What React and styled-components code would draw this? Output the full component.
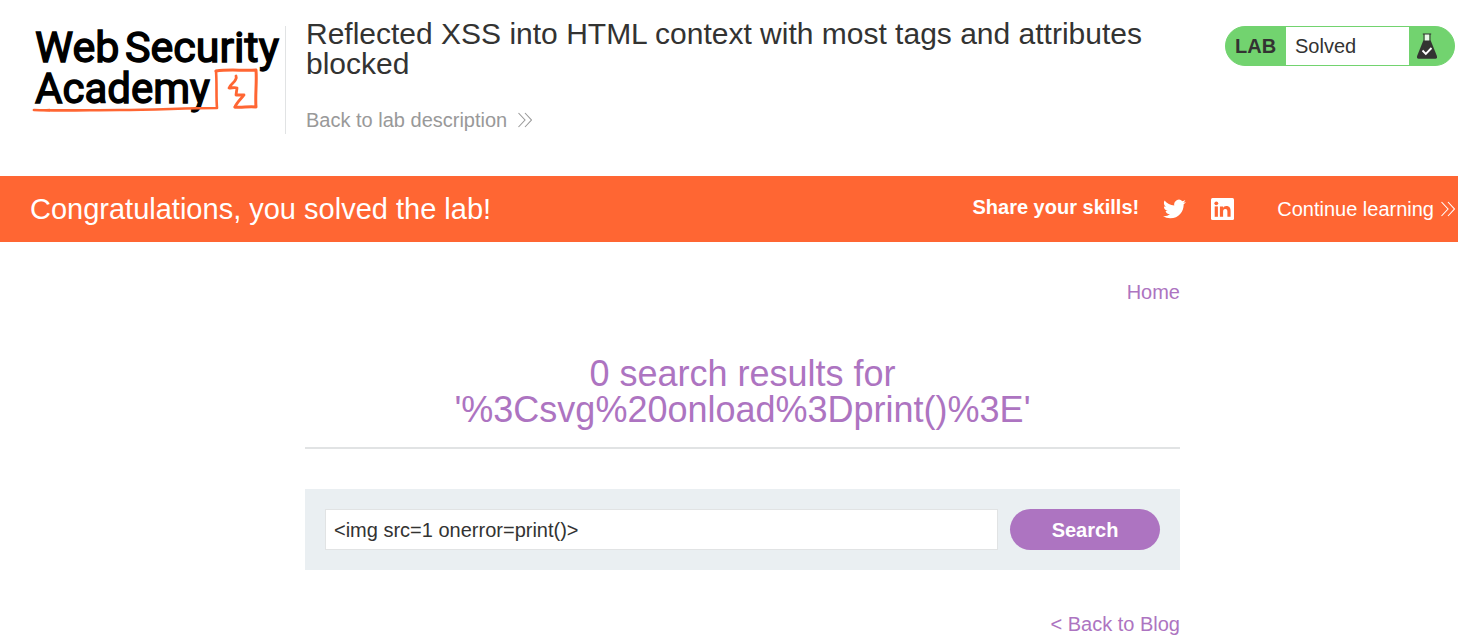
import React, { useState } from "react";
import styled, { createGlobalStyle } from "styled-components";

const colors = {
  orange: "#ff6633",
  purple: "#ad74c1",
  green: "#72d36f",
  ink: "#333332",
  grey: "#999999",
  line: "#e1e3e4",
  panel: "#eaeff2",
};

const GlobalStyle = createGlobalStyle`
  *, *::before, *::after { box-sizing: border-box; }
  body {
    margin: 0;
    background: #ffffff;
    color: ${colors.ink};
    font-family: Arial, "Liberation Sans", sans-serif;
    font-size: 20px;
    line-height: 24px;
    overflow-x: hidden;
  }
`;

const Header = styled.header`
  display: grid;
  grid-template-columns: 286px minmax(0, 875px) 1fr;
  align-items: start;
  padding: 19px 3px 42px 0;
`;

const LogoLink = styled.a`
  display: block;
  height: 108px;
  margin-top: 7px;
  padding-left: 30px;
  border-right: 1px solid ${colors.line};
  color: #000000;

  svg {
    display: block;
    overflow: visible;
  }
`;

const LogoText = styled.text`
  font-family: Roboto, "Liberation Sans", sans-serif;
  font-size: ${(p) => p.$size}px;
  font-weight: 400;
  fill: #000000;
  stroke: #000000;
  stroke-width: 1.4;
`;

const TitleBlock = styled.div`
  padding-left: 20px;
`;

const Title = styled.h1`
  margin: 0 0 29px;
  font-size: 30px;
  line-height: 30px;
  font-weight: 400;
`;

const IconLink = styled.a`
  display: inline-flex;
  align-items: center;
  gap: ${(p) => p.$gap}px;
  color: ${(p) => p.$color};
  text-decoration: none;
  white-space: nowrap;
`;

const Status = styled.div`
  display: flex;
  justify-self: end;
  width: 230px;
  height: 40px;
  margin-top: 7px;
  border: 1px solid ${colors.green};
  border-radius: 20px;
  overflow: hidden;
  background: ${colors.green};
  line-height: 38px;
`;

const StatusTag = styled.span`
  width: 60px;
  padding-left: 9px;
  font-weight: 700;
`;

const StatusText = styled.span`
  flex: 1;
  padding-left: 9px;
  background: #ffffff;
`;

const StatusIcon = styled.span`
  display: flex;
  align-items: center;
  width: 45px;
  padding-left: 7px;
`;

const Banner = styled.section`
  display: flex;
  align-items: center;
  min-height: 66px;
  padding: 0 3px 0 30px;
  background: ${colors.orange};
  color: #ffffff;
`;

const BannerText = styled.h2`
  flex: 1;
  margin: 0;
  font-size: 29px;
  line-height: 32px;
  font-weight: 400;
`;

const Share = styled.div`
  display: flex;
  align-items: center;
  gap: 24px;
  margin-right: 42px;

  a {
    display: block;
    color: #ffffff;
  }

  svg {
    display: block;
  }
`;

const ShareLabel = styled.strong`
  padding-bottom: 4px;
`;

const Main = styled.main`
  max-width: 1180px;
  padding: 38px 0 0 305px;
`;

const LinkRow = styled.nav`
  display: flex;
  justify-content: flex-end;
`;

const TextLink = styled.a`
  color: ${colors.purple};
  text-decoration: none;
`;

const Results = styled.h2`
  margin: 52px 0 40px;
  padding-bottom: 19px;
  border-bottom: 2px solid ${colors.line};
  color: ${colors.purple};
  font-size: 36px;
  line-height: 36px;
  font-weight: 400;
  text-align: center;
`;

const SearchForm = styled.form`
  display: flex;
  gap: 12px;
  margin-bottom: 42px;
  padding: 20px;
  background: ${colors.panel};
`;

const SearchInput = styled.input`
  flex: 1;
  min-width: 0;
  height: 41px;
  padding: 2px 8px 0;
  border: 1px solid ${colors.line};
  border-radius: 0;
  background: #ffffff;
  color: ${colors.ink};
  font: inherit;
  outline: none;
`;

const SearchButton = styled.button`
  width: 150px;
  height: 41px;
  padding: 0;
  border: 0;
  border-radius: 21px;
  background: ${colors.purple};
  color: #ffffff;
  font: inherit;
  font-weight: 700;
  cursor: pointer;
`;

function Logo() {
  return (
    <svg width="250" height="92" viewBox="0 0 250 92" role="img" aria-label="Web Security Academy">
      <LogoText y="36" $size={43}>
        <tspan x="5">Web</tspan>
        <tspan x="95">Security</tspan>
      </LogoText>
      <LogoText x="5" y="77" $size={42}>Academy</LogoText>
      <g fill="none" stroke={colors.orange} strokeLinejoin="round" strokeLinecap="round">
        <path d="M4 84 C30 85 60 84 90 84 C125 84 155 82 187 82 C186 70 187 58 186 45" strokeWidth="2.6" />
        <path d="M186 45 C200 43 213 45 226 44 C227 57 225 69 226 81 C219 80 211 82 205 81" strokeWidth="3" />
        <path d="M206 50 C208 55 200 58 199 62 C202 62 205 61 207 62 L206 69 L214 69 C211 73 207 76 205 81" strokeWidth="2.8" />
      </g>
      <path d="M1 84 L20 82.7 L20 85.5 Z" fill={colors.orange} />
    </svg>
  );
}

function DoubleChevron() {
  return (
    <svg width="14" height="16" viewBox="0 0 14 16" fill="none" stroke="currentColor" strokeWidth="1.1" aria-hidden="true">
      <path d="M0.5 1 L7 8 L0.5 15 M7 1 L13.4 8 L7 15" />
    </svg>
  );
}

function Flask() {
  return (
    <svg width="22" height="28" viewBox="0 0 22 28" aria-hidden="true">
      <path d="M8.6 2 H13.4 V9 H8.6 Z" fill="#ffffff" fillOpacity="0.85" />
      <path d="M8 2 V9 M14 2 V9" stroke={colors.ink} strokeWidth="1" />
      <path d="M6.8 2 H15.2" stroke={colors.ink} strokeWidth="1.2" />
      <path d="M7.3 8.5 H14.7 L20.9 24 Q21.6 26.8 19.4 26.8 H2.6 Q0.4 26.8 1.1 24 Z" fill={colors.ink} />
      <path d="M6.5 18.5 L9.8 21.8 L15.5 16" fill="none" stroke="#ffffff" strokeWidth="1.9" />
    </svg>
  );
}

function Twitter() {
  return (
    <svg width="23" height="24" viewBox="0 0 24 24" fill="currentColor" aria-hidden="true">
      <path d="M23.954 4.569a10 10 0 0 1-2.825.775 4.958 4.958 0 0 0 2.163-2.723c-.951.555-2.005.959-3.127 1.184a4.92 4.92 0 0 0-8.384 4.482C7.691 8.094 4.066 6.13 1.64 3.161a4.822 4.822 0 0 0-.666 2.475c0 1.71.87 3.213 2.188 4.096a4.904 4.904 0 0 1-2.228-.616v.061a4.923 4.923 0 0 0 3.946 4.827 4.996 4.996 0 0 1-2.212.085 4.937 4.937 0 0 0 4.604 3.417 9.868 9.868 0 0 1-6.102 2.105c-.39 0-.779-.023-1.17-.067a13.995 13.995 0 0 0 7.557 2.209c9.054 0 13.999-7.496 13.999-13.986 0-.209 0-.42-.015-.63a9.936 9.936 0 0 0 2.46-2.548z" />
    </svg>
  );
}

function LinkedIn() {
  return (
    <svg width="25" height="24" viewBox="0 0 25 24" aria-hidden="true">
      <rect x="1" y="1" width="23" height="22" rx="1.5" fill="#ffffff" />
      <g fill={colors.orange}>
        <circle cx="6.3" cy="6.3" r="1.9" />
        <path d="M4.7 9.4 H7.9 V19.8 H4.7 Z" />
        <path d="M9.9 9.4 H13 V10.9 C13.6 9.9 14.7 9.1 16.2 9.1 C19.7 9.1 20.6 11.3 20.6 14.2 V19.8 H17.4 V14.8 C17.4 13.2 17.1 11.9 15.3 11.9 C13.5 11.9 13.1 13.2 13.1 14.7 V19.8 H9.9 Z" />
      </g>
    </svg>
  );
}

export default function App() {
  const [term, setTerm] = useState("<img src=1 onerror=print()>");

  return (
    <>
      <GlobalStyle />
      <Header>
        <LogoLink href="#academy">
          <Logo />
        </LogoLink>
        <TitleBlock>
          <Title>Reflected XSS into HTML context with most tags and attributes blocked</Title>
          <IconLink href="#lab" $gap={11} $color={colors.grey}>
            Back to lab description
            <DoubleChevron />
          </IconLink>
        </TitleBlock>
        <Status>
          <StatusTag>LAB</StatusTag>
          <StatusText>Solved</StatusText>
          <StatusIcon>
            <Flask />
          </StatusIcon>
        </Status>
      </Header>
      <Banner>
        <BannerText>Congratulations, you solved the lab!</BannerText>
        <Share>
          <ShareLabel>Share your skills!</ShareLabel>
          <a href="#twitter" aria-label="Share on Twitter">
            <Twitter />
          </a>
          <a href="#linkedin" aria-label="Share on LinkedIn">
            <LinkedIn />
          </a>
        </Share>
        <IconLink href="#continue" $gap={7} $color="#ffffff">
          Continue learning
          <DoubleChevron />
        </IconLink>
      </Banner>
      <Main>
        <LinkRow>
          <TextLink href="#home">Home</TextLink>
        </LinkRow>
        <Results>
          0 search results for
          <br />
          '%3Csvg%20onload%3Dprint()%3E'
        </Results>
        <SearchForm onSubmit={(e) => e.preventDefault()}>
          <SearchInput
            type="text"
            aria-label="Search the blog"
            value={term}
            onChange={(e) => setTerm(e.target.value)}
          />
          <SearchButton type="submit">Search</SearchButton>
        </SearchForm>
        <LinkRow>
          <TextLink href="#blog">&lt; Back to Blog</TextLink>
        </LinkRow>
      </Main>
    </>
  );
}
